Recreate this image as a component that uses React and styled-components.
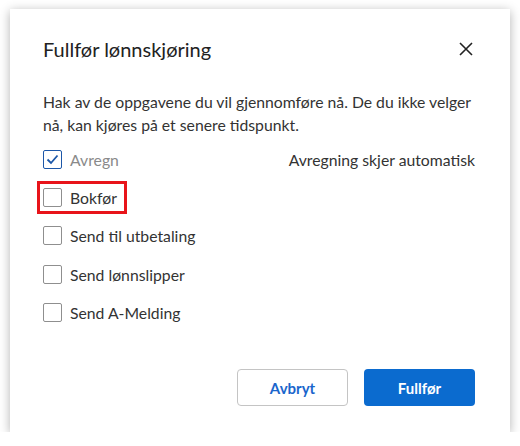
import styled, { createGlobalStyle } from 'styled-components';

const GlobalStyle = createGlobalStyle`
  html, body {
    margin: 0;
    padding: 0;
    background: #ffffff;
  }
  body {
    font-family: Lato, "Open Sans", sans-serif;
    color: #222;
  }
`;

const tasks = [
  { label: 'Avregn', checked: true, disabled: true, note: 'Avregning skjer automatisk' },
  { label: 'Bokfør', highlighted: true },
  { label: 'Send til utbetaling' },
  { label: 'Send lønnslipper' },
  { label: 'Send A-Melding' },
];

const CheckIcon = () => (
  <svg width="13" height="11" viewBox="0 0 13 11" fill="none">
    <path d="M1.5 5.5 L5 9 L11.5 1.5" stroke="#1c57a8" strokeWidth="1.8" />
  </svg>
);

const CloseIcon = () => (
  <svg width="14" height="14" viewBox="0 0 14 14" fill="none">
    <path d="M1 1 L13 13 M13 1 L1 13" stroke="#222" strokeWidth="1.6" />
  </svg>
);

const App = () => {
  return (
    <>
      <GlobalStyle />
      <Dialog>
        <Header>
          <Title>Fullfør lønnskjøring</Title>
          <CloseButton aria-label="Lukk">
            <CloseIcon />
          </CloseButton>
        </Header>

        <Intro>
          Hak av de oppgavene du vil gjennomføre nå. De du ikke velger nå, kan kjøres på et
          senere tidspunkt.
        </Intro>

        <TaskList>
          {tasks.map((task) => (
            <TaskRow key={task.label}>
              <TaskOption $highlighted={task.highlighted}>
                <Box $checked={task.checked}>{task.checked && <CheckIcon />}</Box>
                <TaskLabel $disabled={task.disabled}>{task.label}</TaskLabel>
              </TaskOption>
              {task.note && <Note>{task.note}</Note>}
            </TaskRow>
          ))}
        </TaskList>

        <Footer>
          <SecondaryButton>Avbryt</SecondaryButton>
          <PrimaryButton>Fullfør</PrimaryButton>
        </Footer>
      </Dialog>
    </>
  );
};

export default App;

// Styled Components
const Dialog = styled.div`
  box-sizing: border-box;
  width: 500px;
  height: 423px;
  margin: 9px 0 0 10px;
  padding: 30px 35px 26px 33px;
  background: #fff;
  box-shadow: 0 2px 10px rgba(0, 0, 0, 0.3);
  display: flex;
  flex-direction: column;
`;

const Header = styled.div`
  display: flex;
  align-items: center;
  justify-content: space-between;
  height: 20px;
`;

const Title = styled.h2`
  margin: 0;
  font-size: 20px;
  font-weight: 400;
  color: #222;
`;

const CloseButton = styled.button`
  border: none;
  background: none;
  padding: 0;
  display: flex;
  margin-right: 2px;
`;

const Intro = styled.p`
  margin: 31px 0 0 0;
  font-size: 15.75px;
  line-height: 23px;
  color: #333;
`;

const TaskList = styled.div`
  margin-top: 4px;
  display: flex;
  flex-direction: column;
`;

const TaskRow = styled.div`
  display: flex;
  align-items: center;
  justify-content: space-between;
  height: 38.3px;
`;

const TaskOption = styled.label`
  display: flex;
  align-items: center;
  gap: 8px;
  margin: -3px 0 -3px -6px;
  padding: 4px 7px 4px 3px;
  border: 3px solid ${(p) => (p.$highlighted ? '#e8141a' : 'transparent')};
`;

const Box = styled.span`
  box-sizing: border-box;
  width: 19px;
  height: 19px;
  border-radius: 2px;
  border: 1.5px solid ${(p) => (p.$checked ? '#1c57a8' : '#8f8f8f')};
  display: flex;
  align-items: center;
  justify-content: center;
`;

const TaskLabel = styled.span`
  font-size: 15.75px;
  color: ${(p) => (p.$disabled ? '#8a8a8a' : '#333')};
`;

const Note = styled.span`
  font-size: 15.75px;
  color: #333;
`;

const Footer = styled.div`
  margin-top: auto;
  display: flex;
  justify-content: flex-end;
  gap: 16px;
`;

const ButtonBase = styled.button`
  box-sizing: border-box;
  width: 111px;
  height: 37px;
  border-radius: 4px;
  font-family: Lato, "Open Sans", sans-serif;
  font-size: 15px;
  font-weight: 700;
  cursor: pointer;
`;

const SecondaryButton = styled(ButtonBase)`
  background: #fff;
  border: 1.5px solid #c4c4c4;
  color: #1a66cc;
`;

const PrimaryButton = styled(ButtonBase)`
  background: #0b6bcf;
  border: none;
  color: #fff;
`;
